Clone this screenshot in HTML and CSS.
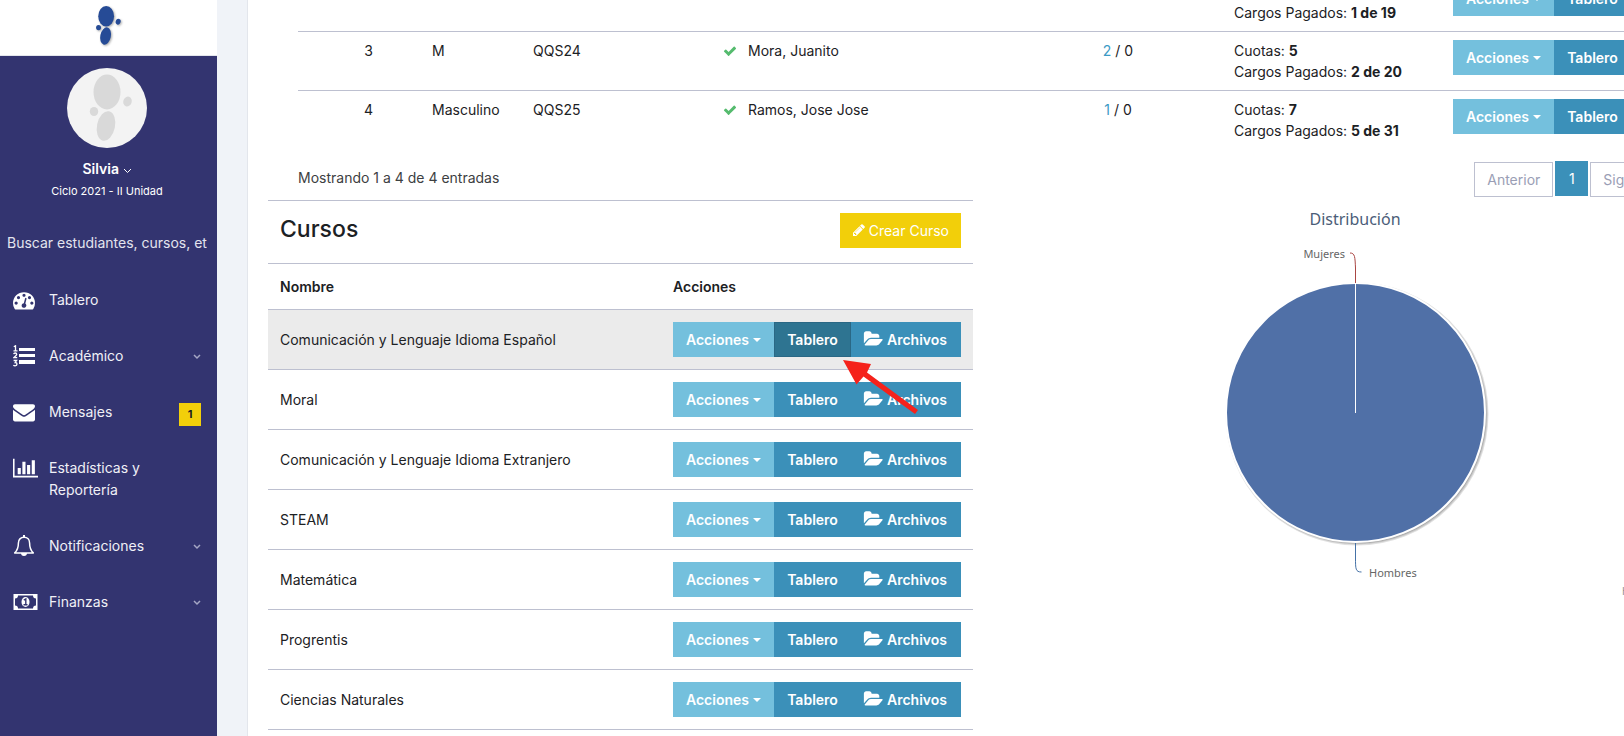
FILE: index.html
```html
<!DOCTYPE html>
<html lang="es">
<head>
  <meta charset="UTF-8">
  <title>Tablero</title>
  <meta name="viewport" content="width=device-width, initial-scale=1.0">
  <link rel="stylesheet" href="styles.css">
</head>
<body>

  <svg class="sprite" aria-hidden="true">
    <symbol id="i-check" viewBox="0 0 1792 1792"><path d="M1671 566q0 40-28 68l-724 724-136 136q-28 28-68 28t-68-28l-136-136-362-362q-28-28-28-68t28-68l136-136q28-28 68-28t68 28l294 295 656-657q28-28 68-28t68 28l136 136q28 28 28 68z"/></symbol>
    <symbol id="i-pencil" viewBox="0 0 1792 1792"><path d="M491 1536l91-91-235-235-91 91v107h128v128h107zm523-928q0-22-22-22-10 0-17 7l-542 542q-7 7-7 17 0 22 22 22 10 0 17-7l542-542q7-7 7-17zm-54-192l416 416-832 832h-416v-416zm683 96q0 53-37 90l-166 166-416-416 166-165q36-38 90-38 53 0 91 38l235 234q37 39 37 91z"/></symbol>
    <symbol id="i-folder" viewBox="0 0 1944 1792"><path d="M1943 952q0 31-31 66l-336 396q-43 51-120.5 86.5t-143.5 35.5h-1088q-34 0-60.5-13t-26.5-43q0-31 31-66l336-396q43-51 120.5-86.5t143.5-35.5h1088q34 0 60.5 13t26.5 43zm-343-344v160h-832q-94 0-197 47.5t-164 119.5l-337 396-5 6q0-4-.5-12.5t-.5-12.5v-960q0-92 66-158t158-66h320q92 0 158 66t66 158v32h544q92 0 158 66t66 158z"/></symbol>
    <symbol id="i-chevron" viewBox="0 0 8 6"><path d="M1 1l3 3 3-3" fill="none" stroke="currentColor" stroke-width="1.5"/></symbol>
    <symbol id="i-chevron-thin" viewBox="0 0 9 7"><path d="M1 2l3.500 3.500L8 2" fill="none" stroke="currentColor"/></symbol>
    <symbol id="i-feet" viewBox="0 0 46 70">
      <ellipse cx="19" cy="19" rx="13.5" ry="17.5"/>
      <ellipse cx="18" cy="53" rx="9" ry="15" transform="rotate(12 18 53)"/>
      <ellipse cx="6" cy="38.500" rx="4.200" ry="4.500"/>
      <ellipse cx="39.500" cy="28.500" rx="4.200" ry="5" transform="rotate(20 39.500 28.500)"/>
    </symbol>
  </svg>

  <nav class="sidebar">
    <div class="brand"><svg class="brand-logo"><use href="#i-feet"/></svg></div>

    <div class="profile">
      <div class="avatar"><svg><use href="#i-feet"/></svg></div>
      <button class="profile-name">Silvia <svg><use href="#i-chevron-thin"/></svg></button>
      <div class="cycle">Ciclo 2021 - II Unidad</div>
      <input class="search" type="text" aria-label="Buscar" placeholder="Buscar estudiantes, cursos, etc...">
    </div>

    <ul class="menu">
      <li><a href="#">
        <svg class="menu-icon" viewBox="0 0 1792 1792"><path d="M384 1152q0-53-37.500-90.500t-90.500-37.500-90.500 37.500-37.500 90.500 37.500 90.500 90.500 37.500 90.500-37.500 37.500-90.500zm192-448q0-53-37.500-90.500t-90.500-37.500-90.500 37.500-37.500 90.500 37.500 90.500 90.500 37.500 90.500-37.500 37.500-90.500zm428 481l101-382q6-26-7.500-48.500t-38.500-29.500-48 6.500-30 39.500l-101 382q-60 5-107 43.500t-63 98.500q-20 77 20 146t117 89 146-20 89-117q16-60-6-117t-72-91zm660-33q0-53-37.500-90.500t-90.500-37.500-90.500 37.500-37.500 90.500 37.500 90.500 90.500 37.500 90.500-37.500 37.500-90.500zm-640-640q0-53-37.500-90.500t-90.500-37.500-90.500 37.500-37.500 90.500 37.500 90.500 90.500 37.500 90.500-37.500 37.500-90.500zm448 192q0-53-37.500-90.500t-90.500-37.500-90.500 37.500-37.500 90.500 37.500 90.500 90.500 37.500 90.500-37.500 37.500-90.500zm320 448q0 261-141 483-19 29-54 29h-1402q-35 0-54-29-141-221-141-483 0-182 71-348t191-286 286-191 348-71 348 71 286 191 191 286 71 348z"/></svg>
        <span>Tablero</span></a></li>
      <li><a href="#">
        <svg class="menu-icon" viewBox="0 0 22 22"><path d="M6 3h16v3H6zM6 9h16v3H6zM6 15h16v4H6z"/><path d="M.8 1.800L2.500.8v5M.5 5.900h4M.6 9.200q.3-1.200 1.600-1.200 1.500 0 1.500 1.200 0 1-3 3.500h3.500M.6 15.500h3L2.200 17.500q1.800 0 1.800 1.600 0 1.700-1.900 1.700-1.100 0-1.700-.7" fill="none" stroke="currentColor" stroke-width="1.300"/></svg>
        <span>Académico</span><svg class="arrow"><use href="#i-chevron"/></svg></a></li>
      <li><a href="#">
        <svg class="menu-icon" viewBox="0 0 1792 1792"><path d="M1792 710v794q0 66-47 113t-113 47h-1472q-66 0-113-47t-47-113v-794q44 49 101 87 362 246 497 345 57 42 92.500 65.500t94.500 48 110 24.500h2q51 0 110-24.500t94.500-48 92.500-65.500q170-123 498-345 57-39 100-87zm0-294q0 79-49 151t-122 123q-376 261-468 325-10 7-42.500 31t-54 38.500-52 32.500-57.500 27-50 9h-2q-23 0-50-9t-57.500-27-52-32.500-54-38.500-42.500-31q-91-64-262-182.500t-205-142.500q-62-42-117-115.500t-55-136.500q0-78 41.500-130t118.500-52h1472q65 0 112.500 47t47.500 113z"/></svg>
        <span>Mensajes</span><span class="badge">1</span></a></li>
      <li><a href="#">
        <svg class="menu-icon wide" viewBox="0 0 2048 1792"><path d="M640 896v512h-256v-512h256zm384-512v1024h-256v-1024h256zm1024 1152v128h-2048v-1536h128v1408h1920zm-640-896v768h-256v-768h256zm384-384v1152h-256v-1152h256z"/></svg>
        <span>Estadísticas y<br>Reportería</span></a></li>
      <li><a href="#">
        <svg class="menu-icon" viewBox="0 0 22 22"><path d="M11 2.200c-3.400 0-5.600 2.500-5.600 5.800 0 4.500-1.400 7.800-3.700 9.900h18.600c-2.300-2.100-3.700-5.400-3.700-9.900 0-3.300-2.200-5.800-5.600-5.800z" fill="none" stroke="currentColor" stroke-width="1.500" stroke-linejoin="round"/><path d="M10 0h2v3h-2zM8 18h6a3 3 0 0 1-6 0z"/></svg>
        <span>Notificaciones</span><svg class="arrow"><use href="#i-chevron"/></svg></a></li>
      <li><a href="#">
        <svg class="menu-icon wide" viewBox="0 0 24 22"><path fill-rule="evenodd" d="M0 3h24v16H0zM4.500 4.500a3 3 0 0 1-3 3v7a3 3 0 0 1 3 3h15a3 3 0 0 1 3-3v-7a3 3 0 0 1-3-3z"/><ellipse cx="12" cy="11" rx="4" ry="5"/><path d="M10.300 9.200L12.300 8v5.500M10 13.800h4" fill="none" stroke="#333470" stroke-width="1.400"/></svg>
        <span>Finanzas</span><svg class="arrow"><use href="#i-chevron"/></svg></a></li>
    </ul>
  </nav>

  <main class="page">
    <div class="content">

      <section class="students">
        <table class="students-table">
          <colgroup>
            <col class="c-pad"><col class="c-num"><col class="c-sex"><col class="c-code"><col class="c-name"><col class="c-count"><col class="c-fees"><col>
          </colgroup>
          <tbody>
            <tr>
              <td></td><td></td><td></td><td></td><td></td><td></td>
              <td><br>Cargos Pagados: <b>1 de 19</b></td>
              <td><div class="btn-group"><button class="btn btn-info">Acciones <i class="caret"></i></button><button class="btn btn-primary">Tablero</button></div></td>
            </tr>
            <tr>
              <td></td><td class="center">3</td><td>M</td><td>QQS24</td>
              <td><svg class="check"><use href="#i-check"/></svg>Mora, Juanito</td>
              <td class="center"><a href="#">2</a> / 0</td>
              <td>Cuotas: <b>5</b><br>Cargos Pagados: <b>2 de 20</b></td>
              <td><div class="btn-group"><button class="btn btn-info">Acciones <i class="caret"></i></button><button class="btn btn-primary">Tablero</button></div></td>
            </tr>
            <tr>
              <td></td><td class="center">4</td><td>Masculino</td><td>QQS25</td>
              <td><svg class="check"><use href="#i-check"/></svg>Ramos, Jose Jose</td>
              <td class="center"><a href="#">1</a> / 0</td>
              <td>Cuotas: <b>7</b><br>Cargos Pagados: <b>5 de 31</b></td>
              <td><div class="btn-group"><button class="btn btn-info">Acciones <i class="caret"></i></button><button class="btn btn-primary">Tablero</button></div></td>
            </tr>
          </tbody>
        </table>
        <div class="table-footer">
          <div class="info">Mostrando 1 a 4 de 4 entradas</div>
          <div class="pager">
            <button>Anterior</button>
            <button class="current">1</button>
            <button>Siguiente</button>
          </div>
        </div>
      </section>

      <div class="row">
        <section class="courses">
          <div class="courses-head">
            <h3>Cursos</h3>
            <button class="btn btn-warning"><svg class="pencil"><use href="#i-pencil"/></svg>Crear Curso</button>
          </div>
          <table class="courses-table">
            <thead>
              <tr><th>Nombre</th><th class="c-actions">Acciones</th></tr>
            </thead>
            <tbody id="courses"></tbody>
          </table>
          <svg class="pointer" viewBox="0 0 76 54"><path d="M0 0l28 4-4 8.500 51 37.500-3 4-51.500-37.500-7 8z"/></svg>
        </section>

        <section class="chart">
          <svg viewBox="0 0 705 400">
            <text class="chart-title" x="352" y="25">Distribución</text>
            <g class="pie-shadow">
              <circle cx="354" cy="214" r="129" stroke-width="5"/>
              <circle cx="354" cy="214" r="129" stroke-width="3"/>
              <circle cx="354" cy="214" r="129" stroke-width="1"/>
            </g>
            <circle class="pie" cx="352.500" cy="212.500" r="129.500"/>
            <path class="slice" d="M352.500 213V83"/>
            <path class="link-m" d="M347 53c5 0 5 4 5.500 15v15"/>
            <path class="link-h" d="M352.500 343v15c0 11 0 14 6 14"/>
            <text class="label" x="342" y="58" text-anchor="end">Mujeres</text>
            <text class="label" x="366" y="377">Hombres</text>
            <text class="credits" x="619" y="395">Highcharts.com</text>
          </svg>
        </section>
      </div>

    </div>
  </main>

  <script>
    const courses = [
      'Comunicación y Lenguaje Idioma Español',
      'Moral',
      'Comunicación y Lenguaje Idioma Extranjero',
      'STEAM',
      'Matemática',
      'Progrentis',
      'Ciencias Naturales'
    ];

    document.getElementById('courses').innerHTML = courses.map((name, i) => `
      <tr class="${i === 0 ? 'hover' : ''}">
        <td>${name}</td>
        <td>
          <div class="btn-group">
            <button class="btn btn-info">Acciones <i class="caret"></i></button>
            <button class="btn btn-primary ${i === 0 ? 'active' : ''}">Tablero</button>
            <button class="btn btn-primary btn-files"><svg class="folder"><use href="#i-folder"/></svg>Archivos</button>
          </div>
        </td>
      </tr>`).join('');
  </script>
</body>
</html>
```
FILE: styles.css
```css
:root {
  --sidebar: #333470;
  --line: #bdc0d0;
  --text: #1c2124;
  --primary: #3b90b9;
  --info: #74c0dd;
  --yellow: #f2cf0a;
}

* { box-sizing: border-box; }

body {
  margin: 0;
  display: flex;
  height: 100vh;
  overflow: hidden;
  background: #f0f3f8;
  color: var(--text);
  font-family: Inter, 'Liberation Sans', sans-serif;
  font-size: 14px;
  line-height: 21px;
}

button, input {
  font: inherit;
  color: inherit;
  border: none;
  background: none;
}

a {
  color: #3b9ac5;
  text-decoration: none;
}

b { font-weight: 700; }

svg { fill: currentColor; }

.sprite {
  position: absolute;
  width: 0;
  height: 0;
}

/* sidebar */
.sidebar {
  flex: 0 0 217px;
  background: var(--sidebar);
  color: #fff;
}

.brand {
  height: 56px;
  background: #fff;
  border-bottom: 1px solid #e4e6ec;
  display: flex;
  justify-content: center;
  padding-top: 5px;
}

.brand-logo {
  width: 27px;
  height: 41px;
  color: #264b96;
  filter: drop-shadow(1px 1px 1px #aaa);
}

.profile {
  display: flex;
  flex-direction: column;
  align-items: center;
  padding: 12px 10px 0 7px;
}

.avatar {
  width: 80px;
  height: 80px;
  padding-left: 8px;
  border-radius: 50%;
  background: #f3f3f3;
  color: #d9d9d9;
  display: flex;
  align-items: center;
  justify-content: center;
}

.avatar svg {
  width: 48px;
  height: 70px;
}

.profile-name {
  margin-top: 10px;
  padding: 0;
  line-height: 21px;
  font-weight: 600;
}

.profile-name svg {
  width: 9px;
  height: 7px;
}

.cycle {
  font-size: 11px;
  margin-top: 2px;
}

.search {
  width: 100%;
  margin-top: 29px;
  padding: 0;
  height: 22px;
}

.search::placeholder {
  color: #e3e4ee;
  opacity: 1;
}

.menu {
  list-style: none;
  margin: 36px 0 0;
  padding: 0 16px 0 13px;
}

.menu a {
  display: flex;
  align-items: flex-start;
  min-height: 22px;
  margin-bottom: 34px;
  color: #f0f0f6;
  font-size: 14px;
  line-height: 22px;
}

.menu span:not(.badge) {
  margin-left: 14px;
  white-space: nowrap;
}

.menu-icon {
  width: 22px;
  height: 22px;
  color: #fff;
  flex-shrink: 0;
}

.menu-icon.wide {
  width: 25px;
  margin-right: -3px;
}

.arrow {
  width: 8px;
  height: 6px;
  margin: 9px 0 0 auto;
  color: #a5a6c4;
}

.badge {
  width: 22px;
  height: 23px;
  margin: 2px 0 -3px auto;
  background: var(--yellow);
  color: #222;
  font-size: 11px;
  font-weight: 700;
  line-height: 23px;
  text-align: center;
}

/* page */
.page {
  flex: 1;
  min-width: 0;
  margin-left: 30px;
  overflow: hidden;
  background: #fff;
  border-left: 1px solid #e3e6ec;
}

/* the tables need more room than a narrow window gives */
.content {
  min-width: 1480px;
  padding: 0 20px;
}

table {
  width: 100%;
  border-collapse: collapse;
  table-layout: fixed;
}

th { text-align: left; font-weight: 600; }

/* students */
.students {
  margin-top: -28px;
  padding: 0 30px;
}

.students-table tr { border-top: 1px solid var(--line); }

.students-table td {
  padding: 8px;
  height: 59px;
  vertical-align: top;
  white-space: nowrap;
}

.students-table td:first-child { padding: 0; }
.students-table .center { text-align: center; }

.c-pad { width: 15px; }
.c-num { width: 111px; }
.c-sex { width: 101px; }
.c-code { width: 190px; }
.c-name { width: 295px; }
.c-count { width: 216px; }
.c-fees { width: 219px; }

.check {
  width: 14px;
  height: 14px;
  margin-right: 11px;
  color: #55bb6e;
  vertical-align: -2px;
}

.table-footer {
  display: flex;
  justify-content: space-between;
  padding-top: 11px;
  height: 50px;
}

.info {
  padding-top: 6px;
  color: #3d4042;
}

.pager {
  display: flex;
  align-items: flex-start;
  gap: 2px;
}

.pager button {
  height: 35px;
  margin-top: 1px;
  padding: 0 12px;
  border: 1px solid var(--line);
  color: #9a9eb5;
}

.pager .current {
  width: 33px;
  margin-top: 0;
  border-color: var(--primary);
  background: var(--primary);
  color: #fff;
}

/* buttons */
.btn-group {
  display: flex;
  height: 35px;
}

.btn {
  display: inline-flex;
  align-items: center;
  justify-content: center;
  height: 35px;
  padding: 0 12px;
  color: #fff;
  font-weight: 600;
  white-space: nowrap;
}

.btn-info {
  flex: 0 0 101px;
  background: var(--info);
}

.btn-primary {
  flex: 0 0 77px;
  background: var(--primary);
}

.btn-primary.active {
  background: #2e7491;
  box-shadow: inset 0 0 0 1px #2a6885;
}

.btn-warning {
  background: var(--yellow);
  font-weight: 400;
}

.btn-files {
  flex: 1;
  padding-right: 14px;
}

.caret {
  margin: 1px 0 0 4px;
  border: 4px solid transparent;
  border-top-color: currentColor;
  border-bottom: 0;
}

.folder {
  width: 20px;
  height: 18px;
  margin-right: 4px;
}

.pencil {
  width: 14px;
  height: 14px;
  margin-right: 3px;
}

/* courses */
.row {
  display: grid;
  grid-template-columns: 1fr 1fr;
  gap: 30px;
}

.courses { position: relative; }

.courses-head {
  display: flex;
  justify-content: space-between;
  align-items: flex-start;
  height: 63px;
  padding: 12px;
  border-top: 1px solid var(--line);
}

.courses-head h3 {
  margin: 0;
  font-size: 23px;
  font-weight: 500;
  line-height: 32px;
}

.courses-table tr { border-top: 1px solid var(--line); }
.courses-table tbody { border-bottom: 1px solid var(--line); }
.courses-table th, .courses-table td { padding: 12px; }
.courses-table .c-actions { width: 312px; }
.courses-table .hover { background: #ebebeb; }

.pointer {
  position: absolute;
  top: 160px;
  right: 54px;
  width: 76px;
  height: 54px;
  color: #f5221b;
}

/* chart */
.chart svg {
  display: block;
  width: 100%;
  font-family: 'Noto Sans', 'Open Sans', sans-serif;
}

.chart-title {
  font-size: 16px;
  fill: #4b5d78;
  text-anchor: middle;
}

.label { font-size: 11px; fill: #666; }
.credits { font-size: 10px; fill: #909090; }

.pie-shadow circle {
  fill: none;
  stroke: #000;
  stroke-opacity: .12;
}

.pie { fill: #5070a7; stroke: #fff; stroke-width: 2; }
.slice { stroke: #fff; fill: none; }
.link-m { stroke: #aa4643; fill: none; }
.link-h { stroke: #4572a7; fill: none; }
```
